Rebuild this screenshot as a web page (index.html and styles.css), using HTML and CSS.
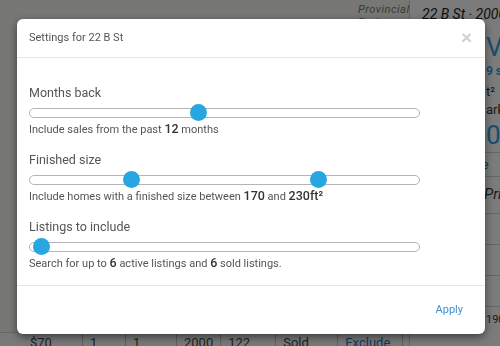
FILE: index.html
```html
<!DOCTYPE html>
<html lang="en">
<head>
    <meta charset="UTF-8">
    <meta name="viewport" content="width=device-width, initial-scale=1.0">
    <title>Settings for 22 B St</title>
    <link rel="stylesheet" href="styles.css">
</head>
<body>
    <div class="page">
        <div class="map-col">
            <div class="map">
                <div class="park">Provincial<br>Park</div>
            </div>
            <table class="comps">
                <tr>
                    <td class="c-price">$70</td>
                    <td class="c-sm">1</td>
                    <td class="c-sm2">1</td>
                    <td class="c-yr">2000</td>
                    <td class="c-sz">122</td>
                    <td class="c-st">Sold</td>
                    <td class="c-ex">Exclude</td>
                </tr>
            </table>
        </div>
        <div class="side">
            <div class="addr">22 B St · 2000</div>
            <div class="big">Va</div>
            <div class="sq">9 sq</div>
            <div class="line">t²</div>
            <div class="line">ark</div>
            <div class="big">00</div>
            <div class="tab">Se</div>
            <div class="price">Pric</div>
            <div class="row"></div>
            <div class="row"></div>
            <div class="row"></div>
            <div class="row small">1900</div>
        </div>
    </div>

    <div class="overlay">
        <div class="modal">
            <div class="modal-header">
                <span class="modal-title">Settings for 22 B St</span>
                <span class="close">&times;</span>
            </div>
            <div class="modal-body">
                <div class="setting">
                    <div class="label">Months back</div>
                    <div class="track">
                        <span class="thumb" style="left: 160px"></span>
                    </div>
                    <div class="help">Include sales from the past <b>12</b> months</div>
                </div>
                <div class="setting">
                    <div class="label">Finished size</div>
                    <div class="track">
                        <span class="thumb" style="left: 93px"></span>
                        <span class="thumb" style="left: 280px"></span>
                    </div>
                    <div class="help">Include homes with a finished size between <b>170</b> and <b>230ft²</b></div>
                </div>
                <div class="setting">
                    <div class="label">Listings to include</div>
                    <div class="track">
                        <span class="thumb" style="left: 3px"></span>
                    </div>
                    <div class="help">Search for up to <b>6</b> active listings and <b>6</b> sold listings.</div>
                </div>
            </div>
            <div class="modal-footer">
                <a class="apply" href="#">Apply</a>
            </div>
        </div>
    </div>
</body>
</html>
```

FILE: styles.css
```css
html, body {
    margin: 0;
    padding: 0;
    height: 100%;
    overflow: hidden;
}
body {
    font-family: Roboto, "Liberation Sans", sans-serif;
    background: #f2f2f2;
    color: #333;
}

/* page behind the dialog */
.page {
    display: grid;
    grid-template-columns: 410px 90px;
    height: 346px;
}
.map-col {
    border-right: 1px solid #ccc;
}
.map {
    height: 332px;
    background: #eeeeea;
    border-bottom: 1px solid #ccc;
}
.park {
    padding: 3px 0 0 358px;
    font-style: italic;
    font-size: 11px;
    line-height: 13px;
    color: #6a7a60;
    letter-spacing: 0.5px;
}
.comps {
    border-collapse: collapse;
    margin-left: 23px;
    font-size: 13px;
    color: #444;
}
.comps td {
    border-right: 1px solid #bbb;
    padding: 2px 7px;
    height: 14px;
}
.c-price { width: 45px; }
.c-sm { width: 28px; }
.c-sm2 { width: 36px; }
.c-yr { width: 29px; }
.c-sz { width: 40px; }
.c-st { width: 47px; }
.c-ex { width: 50px; color: #2d6fb0; }

.side {
    padding: 6px 0 0 12px;
    overflow: hidden;
    white-space: nowrap;
    background: #f7f7f7;
}
.addr {
    font-style: italic;
    font-size: 14px;
    color: #222;
    height: 26px;
}
.big {
    font-size: 26px;
    color: #2b9ed8;
    height: 32px;
    padding-left: 64px;
}
.sq {
    font-size: 12px;
    color: #2b9ed8;
    padding-left: 64px;
    font-weight: bold;
    height: 20px;
}
.line {
    font-size: 13px;
    padding-left: 64px;
    height: 18px;
}
.tab {
    color: #2d6fb0;
    font-size: 13px;
    padding: 4px 0 4px 64px;
    border-top: 1px solid #ccc;
    border-bottom: 1px solid #ccc;
    margin-left: -12px;
}
.price {
    font-style: italic;
    font-size: 15px;
    padding: 8px 0 0 62px;
    height: 28px;
}
.row {
    height: 30px;
    border-top: 1px solid #ccc;
    margin-left: -12px;
}
.row.small {
    font-size: 11px;
    padding: 6px 0 0 76px;
}

/* dialog */
.overlay {
    position: fixed;
    inset: 0;
    background: rgba(0, 0, 0, 0.5);
    padding: 19px 0 0 17px;
}
.modal {
    width: 468px;
    height: 315px;
    background: #fff;
    border-radius: 6px;
    box-shadow: 0 3px 9px rgba(0, 0, 0, 0.5);
    display: flex;
    flex-direction: column;
}
.modal-header {
    height: 38px;
    border-bottom: 1px solid #e5e5e5;
    display: flex;
    align-items: center;
    justify-content: space-between;
    padding: 0 13px 0 12px;
}
.modal-title {
    font-size: 11px;
    color: #555;
}
.close {
    font-family: "Liberation Sans", sans-serif;
    font-size: 19px;
    font-weight: bold;
    color: #d0d0d0;
    line-height: 1;
}
.modal-body {
    flex: 1;
    padding: 26px 12px 0 12px;
    border-bottom: 1px solid #e5e5e5;
}
.setting {
    margin-bottom: 13px;
}
.label {
    font-size: 12.5px;
    color: #555;
    line-height: 17px;
}
.track {
    position: relative;
    width: 389px;
    height: 8px;
    border: 1px solid #b5b5b5;
    border-radius: 5px;
    margin-top: 7px;
}
.thumb {
    position: absolute;
    top: -5px;
    width: 17px;
    height: 17px;
    border-radius: 50%;
    background: #27a6e2;
}
.help {
    font-size: 11px;
    color: #555;
    margin-top: 3px;
    line-height: 16px;
}
.help b {
    font-size: 12.5px;
    color: #333;
    font-weight: 500;
}
.modal-footer {
    height: 49px;
    display: flex;
    align-items: center;
    justify-content: flex-end;
    padding-right: 22px;
}
.apply {
    font-size: 11px;
    color: #3d8fd6;
    text-decoration: none;
}
```
